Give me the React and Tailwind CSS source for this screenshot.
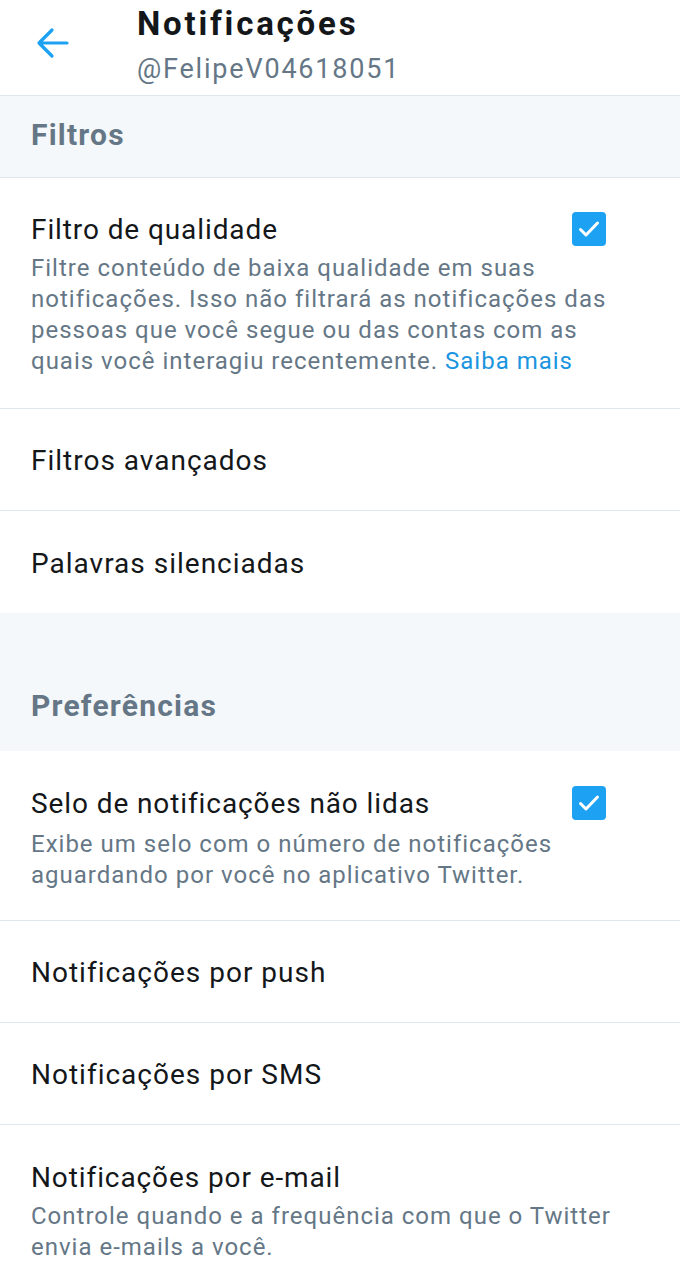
export default function App() {
  const Check = () => (
    <div className="w-[34px] h-[34px] rounded-[4px] bg-[#1da1f2] flex items-center justify-center shrink-0">
      <svg width="24" height="24" viewBox="0 0 24 24" fill="none">
        <path d="M3.5 12.5l5.5 5.5L20.5 6" stroke="white" strokeWidth="3" strokeLinecap="round" strokeLinejoin="round" />
      </svg>
    </div>
  );
  const Simple = ({ t, border = true }) => (
    <div className={`h-[102px] flex items-center px-[31px] pt-[3px] ${border ? "border-b border-[#e1e8ed]" : ""}`}>
      <span className="text-[28px] tracking-[1px] text-[#14171a]">{t}</span>
    </div>
  );
  return (
    <div className="w-[680px] h-[1280px] bg-white overflow-hidden" style={{ fontFamily: "Roboto, 'Noto Sans', sans-serif" }}>
      <div className="h-[96px] flex border-b border-[#e1e8ed]">
        <div className="w-[137px] flex items-start pt-[27px] pl-[36px]">
          <svg width="34" height="32" viewBox="0 0 34 32" fill="none">
            <path d="M31 16H4M16 3L3 16l13 13" stroke="#1da1f2" strokeWidth="3.2" strokeLinecap="round" strokeLinejoin="round" />
          </svg>
        </div>
        <div className="flex flex-col pt-[2px]">
          <span className="text-[33px] font-bold tracking-[2.8px] text-[#14171a] leading-[44px]">Notificações</span>
          <span className="text-[27px] tracking-[1.8px] text-[#657786] leading-[40px] mt-[3px]">@FelipeV04618051</span>
        </div>
      </div>
      <div className="h-[82px] bg-[#f5f8fa] border-b border-[#e1e8ed] flex items-center px-[31px] pb-[4px]">
        <span className="text-[30px] font-bold tracking-[1.2px] text-[#657786]">Filtros</span>
      </div>
      <div className="h-[231px] border-b border-[#e1e8ed] px-[31px] pt-[34px]">
        <div className="flex justify-between">
          <span className="text-[28px] tracking-[0.9px] text-[#14171a] leading-[36px]">Filtro de qualidade</span>
          <div className="mr-[43px]"><Check /></div>
        </div>
        <p className="text-[24px] tracking-[1px] text-[#657786] leading-[31px] mt-[5px] whitespace-nowrap">
          Filtre conteúdo de baixa qualidade em suas<br />
          notificações. Isso não filtrará as notificações das<br />
          pessoas que você segue ou das contas com as<br />
          quais você interagiu recentemente. <span className="text-[#1b95e0]">Saiba mais</span>
        </p>
      </div>
      <Simple t="Filtros avançados" />
      <Simple t="Palavras silenciadas" border={false} />
      <div className="h-[138px] bg-[#f5f8fa] flex items-end px-[31px] pb-[23px]">
        <span className="text-[30px] font-bold tracking-[1.2px] text-[#657786]">Preferências</span>
      </div>
      <div className="h-[170px] border-b border-[#e1e8ed] px-[31px] pt-[35px]">
        <div className="flex justify-between">
          <span className="text-[28px] tracking-[0.9px] text-[#14171a] leading-[36px]">Selo de notificações não lidas</span>
          <div className="mr-[43px]"><Check /></div>
        </div>
        <p className="text-[24px] tracking-[1px] text-[#657786] leading-[31px] mt-[7px] whitespace-nowrap">
          Exibe um selo com o número de notificações<br />aguardando por você no aplicativo Twitter.
        </p>
      </div>
      <Simple t="Notificações por push" />
      <Simple t="Notificações por SMS" />
      <div className="px-[31px] pt-[35px]">
        <div className="text-[28px] tracking-[0.9px] text-[#14171a] leading-[36px]">Notificações por e-mail</div>
        <p className="text-[24px] tracking-[1px] text-[#657786] leading-[31px] mt-[5px] whitespace-nowrap">
          Controle quando e a frequência com que o Twitter<br />envia e-mails a você.
        </p>
      </div>
    </div>
  );
}
